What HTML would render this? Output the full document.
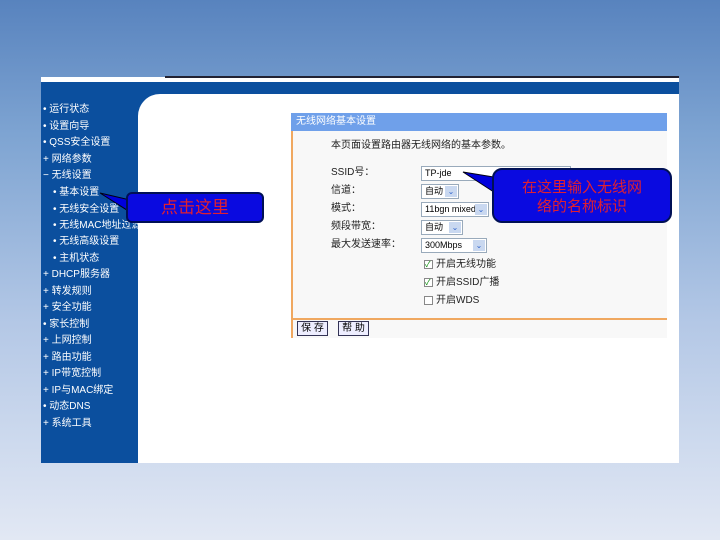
<!DOCTYPE html>
<html><head><meta charset="utf-8"><style>
*{margin:0;padding:0;box-sizing:border-box}
body{width:720px;height:540px;overflow:hidden;background:linear-gradient(#5883be 0%,#7ea4d2 25%,#b4c8e6 60%,#e2e8f4 100%);font-family:"Liberation Sans","Noto Sans CJK SC",sans-serif;position:relative}
.abs{position:absolute}
.menu div{position:absolute;color:#fff;font-size:10px;white-space:nowrap;line-height:12px}
.lbl{position:absolute;font-size:10px;color:#222;white-space:nowrap;line-height:12px}
.sel{position:absolute;height:15px;border:1px solid #9ab;background:#fff;font-size:9px;line-height:13px;padding-left:3px;color:#000}
.sel i{position:absolute;right:1px;top:1px;width:12px;height:11px;background:#c9d8f0;font-style:normal;font-size:8px;color:#36c;text-align:center;line-height:11px}
.cb{position:absolute;width:9px;height:9px;border:1px solid #888;background:#fff;font-size:8px;color:#080;line-height:8px}
</style></head><body>
<div class="abs" style="left:41px;top:77px;width:638px;height:5px;background:#fff"></div>
<div class="abs" style="left:165px;top:76px;width:514px;height:2px;background:#223"></div>
<div class="abs" style="left:41px;top:82px;width:638px;height:381px;background:#0b4f9e"></div>
<div class="abs" style="left:138px;top:94px;width:541px;height:369px;background:#fff;border-top-left-radius:22px"></div>
<div class="menu">
<div style="left:43px;top:104px">• 运行状态</div>
<div style="left:43px;top:121px">• 设置向导</div>
<div style="left:43px;top:137px">• QSS安全设置</div>
<div style="left:43px;top:154px">+ 网络参数</div>
<div style="left:43px;top:170px">− 无线设置</div>
<div style="left:53px;top:187px">• 基本设置</div>
<div style="left:53px;top:204px">• 无线安全设置</div>
<div style="left:53px;top:220px">• 无线MAC地址过滤</div>
<div style="left:53px;top:236px">• 无线高级设置</div>
<div style="left:53px;top:253px">• 主机状态</div>
<div style="left:43px;top:269px">+ DHCP服务器</div>
<div style="left:43px;top:286px">+ 转发规则</div>
<div style="left:43px;top:302px">+ 安全功能</div>
<div style="left:43px;top:319px">• 家长控制</div>
<div style="left:43px;top:335px">+ 上网控制</div>
<div style="left:43px;top:352px">+ 路由功能</div>
<div style="left:43px;top:368px">+ IP带宽控制</div>
<div style="left:43px;top:385px">+ IP与MAC绑定</div>
<div style="left:43px;top:401px">• 动态DNS</div>
<div style="left:43px;top:418px">+ 系统工具</div>
</div>
<div class="abs" style="left:291px;top:113px;width:376px;height:225px;background:#f8f8f8;border-left:2px solid #f0a860"></div>
<div class="abs" style="left:291px;top:113px;width:376px;height:18px;background:#6fa0ea;color:#fff;font-size:10px;line-height:18px;padding-left:5px">无线网络基本设置</div>
<div class="abs" style="left:291px;top:318px;width:376px;height:2px;background:#f0a860"></div>
<div class="lbl" style="left:331px;top:140px">本页面设置路由器无线网络的基本参数。</div>
<div class="lbl" style="left:331px;top:167px">SSID号：</div>
<div class="lbl" style="left:331px;top:185px">信道：</div>
<div class="lbl" style="left:331px;top:203px">模式：</div>
<div class="lbl" style="left:331px;top:221px">频段带宽：</div>
<div class="lbl" style="left:331px;top:239px">最大发送速率：</div>
<div class="sel" style="left:421px;top:166px;width:150px">TP-jde</div>
<div class="sel" style="left:421px;top:184px;width:38px">自动<i>⌄</i></div>
<div class="sel" style="left:421px;top:202px;width:68px">11bgn mixed<i>⌄</i></div>
<div class="sel" style="left:421px;top:220px;width:42px">自动<i>⌄</i></div>
<div class="sel" style="left:421px;top:238px;width:66px">300Mbps<i>⌄</i></div>
<div class="cb" style="left:424px;top:260px">✓</div><div class="lbl" style="left:436px;top:259px">开启无线功能</div>
<div class="cb" style="left:424px;top:278px">✓</div><div class="lbl" style="left:436px;top:277px">开启SSID广播</div>
<div class="cb" style="left:424px;top:296px"></div><div class="lbl" style="left:436px;top:295px">开启WDS</div>
<div class="abs" style="left:297px;top:321px;width:31px;height:15px;border:1px solid #335;background:#eef;font-size:10px;line-height:13px;text-align:center">保 存</div>
<div class="abs" style="left:338px;top:321px;width:31px;height:15px;border:1px solid #335;background:#eef;font-size:10px;line-height:13px;text-align:center">帮 助</div>
<svg class="abs" style="left:0;top:0" width="720" height="540">
<polygon points="100,193 130,200 130,212" fill="#0000dd" stroke="#001" stroke-width="1"/>
<polygon points="463,172 500,178 500,196" fill="#0000dd" stroke="#001" stroke-width="1"/>
</svg>
<div class="abs" style="left:126px;top:192px;width:138px;height:31px;background:#0a0ae0;border:2px solid #001055;border-radius:6px;color:#e02030;font-size:17px;text-align:center;line-height:27px">点击这里</div>
<div class="abs" style="left:492px;top:168px;width:180px;height:55px;background:#0a0ae0;border:2px solid #001055;border-radius:10px;color:#e02030;font-size:15px;text-align:center;line-height:19px;padding-top:8px">在这里输入无线网<br>络的名称标识</div>
</body></html>
